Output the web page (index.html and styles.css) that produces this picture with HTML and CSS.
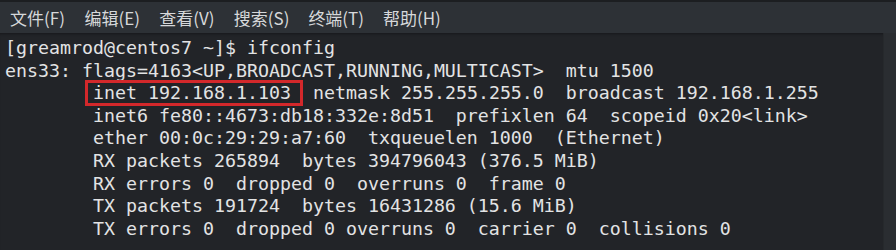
FILE: index.html
```html
<!DOCTYPE html>
<html lang="zh-CN">
<head>
<meta charset="utf-8">
<title>终端</title>
<link rel="stylesheet" href="styles.css">
</head>
<body>
<div class="window">
  <nav class="menubar">
    <span class="menu-item">文件(F)</span>
    <span class="menu-item">编辑(E)</span>
    <span class="menu-item">查看(V)</span>
    <span class="menu-item">搜索(S)</span>
    <span class="menu-item">终端(T)</span>
    <span class="menu-item">帮助(H)</span>
  </nav>
  <div class="terminal">
    <pre class="output">[greamrod@centos7 ~]$ ifconfig
ens33: flags=4163&lt;UP,BROADCAST,RUNNING,MULTICAST&gt;  mtu 1500
        <span class="mark">inet 192.168.1.103</span>  netmask 255.255.255.0  broadcast 192.168.1.255
        inet6 fe80::4673:db18:332e:8d51  prefixlen 64  scopeid 0x20&lt;link&gt;
        ether 00:0c:29:29:a7:60  txqueuelen 1000  (Ethernet)
        RX packets 265894  bytes 394796043 (376.5 MiB)
        RX errors 0  dropped 0  overruns 0  frame 0
        TX packets 191724  bytes 16431286 (15.6 MiB)
        TX errors 0  dropped 0 overruns 0  carrier 0  collisions 0</pre>
    <div class="scrollbar"></div>
  </div>
</div>
</body>
</html>
```

FILE: styles.css
```css
html, body {
  margin: 0;
  padding: 0;
  background: #222428;
}
.window {
  width: 896px;
  height: 250px;
  display: flex;
  flex-direction: column;
  overflow: hidden;
}
.menubar {
  height: 31px;
  flex: none;
  background: #2d3136;
  border-top: 2px solid #1c1e21;
  display: flex;
  align-items: center;
  padding-left: 10px;
  font-family: "Noto Sans CJK SC", "Noto Sans", sans-serif;
  font-size: 17px;
  color: #d6d8da;
}
.menu-item {
  width: 74.6px;
  white-space: nowrap;
  line-height: 31px;
}
.terminal {
  flex: 1;
  display: flex;
  background: #222428;
  box-shadow: inset 0 3px 3px -2px rgba(0,0,0,0.35);
}
.output {
  flex: 1;
  margin: 0;
  padding: 4px 0 0 5px;
  font-family: "DejaVu Sans Mono", "Liberation Mono", monospace;
  font-size: 18.27px;
  line-height: 22.6px;
  color: #e2e3e4;
  white-space: pre;
  overflow: hidden;
}
.mark {
  position: relative;
}
.mark::after {
  content: "";
  position: absolute;
  left: -8px;
  right: -12px;
  top: -2px;
  bottom: -3px;
  border: 3px solid #d3282b;
}
.scrollbar {
  width: 12px;
  flex: none;
  background: #2a2d31;
  border-left: 1px solid #26292c;
}
```
